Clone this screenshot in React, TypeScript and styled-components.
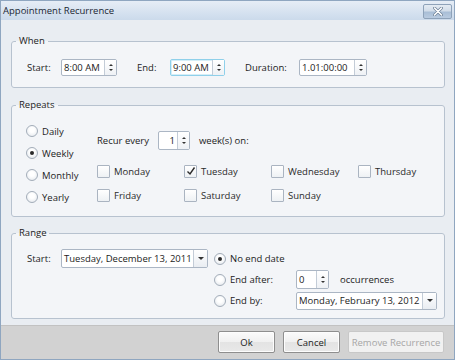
import React from "react";
import styled, { createGlobalStyle, css } from "styled-components";

const GlobalStyle = createGlobalStyle`
  html, body { margin: 0; padding: 0; background: #ffffff; }
  body { font-family: "Open Sans", "Noto Sans", Arial, sans-serif; font-size: 9.5px; color: #1c1c1c; }
  * { box-sizing: border-box; }
`;

const Window = styled.div`
  width: 455px;
  height: 360px;
  border: 1px solid #8fa6c0;
  display: flex;
  flex-direction: column;
  background: #e9edf2;
`;

const TitleBar = styled.div`
  height: 19px;
  flex: none;
  display: flex;
  align-items: center;
  justify-content: space-between;
  padding: 0 2px 0 2px;
  background: linear-gradient(#e6edf6, #cbdaeb);
  color: #1b2733;
  font-size: 9.5px;
`;

const CloseButton = styled.button`
  width: 29px;
  height: 15px;
  padding: 0;
  margin-top: 1px;
  border: 1px solid #8ea2b9;
  border-radius: 2px;
  background: linear-gradient(#e4ebf3 0%, #d2dde9 45%, #a9bed6 55%, #b9cbe0 100%);
  display: flex;
  align-items: center;
  justify-content: center;
`;

const Body = styled.div`
  flex: 1;
  display: flex;
  flex-direction: column;
  gap: 10px;
  padding: 14px 9px 0 10px;
`;

const Group = styled.fieldset<{ $pt: number; $pb: number; $mt?: number }>`
  margin: ${(p) => p.$mt ?? 0}px 0 0 0;
  border: 1px solid #b7c2cf;
  border-radius: 3px;
  background: #f3f5f8;
  padding: ${(p) => p.$pt}px 0 ${(p) => p.$pb}px 0;
  min-width: 0;
`;

const Legend = styled.legend`
  padding: 0 3px;
  margin-left: 4px;
  line-height: 14px;
  height: 14px;
  color: #1c1c1c;
`;

const Row = styled.div<{ $pl?: number; $h?: number; $mt?: number }>`
  display: flex;
  align-items: center;
  padding-left: ${(p) => p.$pl ?? 0}px;
  margin-top: ${(p) => p.$mt ?? 0}px;
  height: ${(p) => (p.$h ? `${p.$h}px` : "auto")};
`;

const FieldLabel = styled.span<{ $w: number; $ml?: number }>`
  width: ${(p) => p.$w}px;
  margin-left: ${(p) => p.$ml ?? 0}px;
  flex: none;
  white-space: nowrap;
`;

const BoxFrame = styled.div<{ $w: number; $h: number; $focus?: boolean }>`
  width: ${(p) => p.$w}px;
  height: ${(p) => p.$h}px;
  flex: none;
  display: flex;
  border: 1px solid ${(p) => (p.$focus ? "#8fd0ea" : "#abb6c4")};
  border-radius: 2px;
  background: #fff;
  ${(p) =>
    p.$focus &&
    css`
      box-shadow: inset 0 0 0 1px #d5eef8;
    `}
`;

const BoxText = styled.span<{ $align?: string }>`
  flex: 1;
  display: flex;
  align-items: center;
  justify-content: ${(p) => p.$align ?? "flex-start"};
  padding: 0 2px 0 2px;
  white-space: nowrap;
  overflow: hidden;
  color: #1c1c1c;
`;

const SpinButtons = styled.span`
  width: 12px;
  flex: none;
  border-left: 1px solid #c3ccd7;
  display: flex;
  flex-direction: column;
  align-items: center;
  justify-content: center;
  gap: 3px;
  background: linear-gradient(#ffffff, #eef1f5);
`;

const Triangle = styled.span<{ $down?: boolean }>`
  width: 0;
  height: 0;
  border-left: 2px solid transparent;
  border-right: 2px solid transparent;
  ${(p) =>
    p.$down
      ? css`border-top: 2px solid #333;`
      : css`border-bottom: 2px solid #333;`}
`;

const DropButton = styled.span`
  width: 14px;
  flex: none;
  border-left: 1px solid #c3ccd7;
  display: flex;
  align-items: center;
  justify-content: center;
  background: linear-gradient(#ffffff, #e9edf2);
`;

const DropArrow = styled.span`
  width: 0;
  height: 0;
  border-left: 3px solid transparent;
  border-right: 3px solid transparent;
  border-top: 3px solid #333;
`;

const RadioCircle = styled.span<{ $checked?: boolean }>`
  width: 12px;
  height: 12px;
  flex: none;
  border-radius: 50%;
  border: 1px solid #a3adb9;
  background: radial-gradient(circle at 50% 40%, #ffffff 30%, #dfe4ea 100%);
  display: flex;
  align-items: center;
  justify-content: center;
  &::after {
    content: "";
    width: 4px;
    height: 4px;
    border-radius: 50%;
    background: ${(p) => (p.$checked ? "#2a2a2a" : "transparent")};
  }
`;

const OptionLabel = styled.span<{ $gap?: number; $w?: number }>`
  margin-left: ${(p) => p.$gap ?? 4}px;
  width: ${(p) => (p.$w ? `${p.$w}px` : "auto")};
  flex: none;
  white-space: nowrap;
`;

const RadioColumn = styled.div`
  width: 76px;
  flex: none;
  padding-left: 14px;
  display: flex;
  flex-direction: column;
`;

const Separator = styled.div`
  width: 1px;
  flex: none;
  background: #aab5c3;
`;

const RightPane = styled.div`
  flex: 1;
  padding-left: 8px;
  display: flex;
  flex-direction: column;
`;

const DaysGrid = styled.div`
  display: grid;
  grid-template-columns: repeat(4, 87px);
  grid-auto-rows: 24px;
  align-items: center;
  margin-top: 9px;
`;

const CheckItem = styled.div`
  display: flex;
  align-items: center;
  color: #2a2a2a;
`;

const CheckBox = styled.span`
  width: 13px;
  height: 13px;
  flex: none;
  border: 1px solid #aab4c1;
  border-radius: 1px;
  background: linear-gradient(#ffffff, #eef1f4);
  display: flex;
  align-items: center;
  justify-content: center;
`;

const RangeLayout = styled.div`
  display: flex;
  padding-left: 15px;
`;

const RangeLeft = styled.div`
  display: flex;
  align-items: center;
  height: 21px;
  flex: none;
`;

const RangeRight = styled.div`
  display: flex;
  flex-direction: column;
  margin-left: 6px;
`;

const Footer = styled.div`
  height: 34px;
  flex: none;
  margin-top: 6px;
  background: #d2d2d2;
  border-top: 1px solid #c2c2c2;
  display: flex;
  justify-content: flex-end;
  align-items: flex-start;
  gap: 8px;
  padding: 5px 10px 0 0;
`;

const Button = styled.button<{ $w: number; $disabled?: boolean }>`
  width: ${(p) => p.$w}px;
  height: 22px;
  padding: 0;
  font-family: inherit;
  font-size: 9.5px;
  white-space: nowrap;
  border-radius: 2px;
  border: 1px solid ${(p) => (p.$disabled ? "#c8c8c8" : "#8e8e8e")};
  color: ${(p) => (p.$disabled ? "#a6a6a6" : "#1c1c1c")};
  background: ${(p) =>
    p.$disabled ? "#f1f1f1" : "linear-gradient(#fbfbfb 0%, #f0f0f0 50%, #e3e3e3 51%, #e9e9e9 100%)"};
  box-shadow: ${(p) => (p.$disabled ? "none" : "inset 0 0 0 1px #fdfdfd")};
`;

const SpinBox = ({ value, w, h = 17, focus, align }: { value: string; w: number; h?: number; focus?: boolean; align?: string }) => (
  <BoxFrame $w={w} $h={h} $focus={focus}>
    <BoxText $align={align}>{value}</BoxText>
    <SpinButtons>
      <Triangle />
      <Triangle $down />
    </SpinButtons>
  </BoxFrame>
);

const DropDown = ({ value, w, h = 19 }: { value: string; w: number; h?: number }) => (
  <BoxFrame $w={w} $h={h}>
    <BoxText>{value}</BoxText>
    <DropButton>
      <DropArrow />
    </DropButton>
  </BoxFrame>
);

const Radio = ({ label, checked, w }: { label: string; checked?: boolean; w?: number }) => (
  <>
    <RadioCircle $checked={checked} />
    <OptionLabel $w={w}>{label}</OptionLabel>
  </>
);

const Check = ({ label, checked }: { label: string; checked?: boolean }) => (
  <CheckItem>
    <CheckBox>
      {checked && (
        <svg width="10" height="10" viewBox="0 0 10 10">
          <path d="M1.5 5.5 L4 8 L8.5 1.5" fill="none" stroke="#2b2b2b" strokeWidth="1.4" />
        </svg>
      )}
    </CheckBox>
    <OptionLabel $gap={4}>{label}</OptionLabel>
  </CheckItem>
);

export default function App() {
  return (
    <>
      <GlobalStyle />
      <Window>
        <TitleBar>
          <span>Appointment Recurrence</span>
          <CloseButton aria-label="Close">
            <svg width="10" height="9" viewBox="0 0 10 9">
              <path d="M1.5 1 L8.5 8 M8.5 1 L1.5 8" stroke="#6f8298" strokeWidth="3" strokeLinecap="round" />
              <path d="M1.5 1 L8.5 8 M8.5 1 L1.5 8" stroke="#ffffff" strokeWidth="1.6" strokeLinecap="round" />
            </svg>
          </CloseButton>
        </TitleBar>
        <Body>
          <Group $pt={11} $pb={11}>
            <Legend>When</Legend>
            <Row $pl={15}>
              <FieldLabel $w={34}>Start:</FieldLabel>
              <SpinBox value="8:00 AM" w={56} />
              <FieldLabel $w={33} $ml={20}>End:</FieldLabel>
              <SpinBox value="9:00 AM" w={55} focus />
              <FieldLabel $w={54} $ml={20}>Duration:</FieldLabel>
              <SpinBox value="1.01:00:00" w={68} />
            </Row>
          </Group>

          <Group $pt={8} $pb={8}>
            <Legend>Repeats</Legend>
            <Row>
              <RadioColumn>
                <Row $h={22}><Radio label="Daily" /></Row>
                <Row $h={22}><Radio label="Weekly" checked /></Row>
                <Row $h={22}><Radio label="Monthly" /></Row>
                <Row $h={22}><Radio label="Yearly" /></Row>
              </RadioColumn>
              <Separator />
              <RightPane>
                <Row $h={19} $mt={10}>
                  <FieldLabel $w={61}>Recur every</FieldLabel>
                  <SpinBox value="1" w={32} h={19} align="flex-end" />
                  <FieldLabel $w={80} $ml={9}>week(s) on:</FieldLabel>
                </Row>
                <DaysGrid>
                  <Check label="Monday" />
                  <Check label="Tuesday" checked />
                  <Check label="Wednesday" />
                  <Check label="Thursday" />
                  <Check label="Friday" />
                  <Check label="Saturday" />
                  <Check label="Sunday" />
                </DaysGrid>
              </RightPane>
            </Row>
          </Group>

          <Group $pt={8} $pb={7} $mt={-1}>
            <Legend>Range</Legend>
            <RangeLayout>
              <RangeLeft>
                <FieldLabel $w={34}>Start:</FieldLabel>
                <DropDown value="Tuesday, December 13, 2011" w={147} />
              </RangeLeft>
              <RangeRight>
                <Row $h={21}><Radio label="No end date" checked /></Row>
                <Row $h={21}>
                  <Radio label="End after:" w={66} />
                  <SpinBox value="0" w={33} h={19} />
                  <FieldLabel $w={70} $ml={11}>occurrences</FieldLabel>
                </Row>
                <Row $h={21}>
                  <Radio label="End by:" w={66} />
                  <DropDown value="Monday, February 13, 2012" w={141} h={18} />
                </Row>
              </RangeRight>
            </RangeLayout>
          </Group>
        </Body>
        <Footer>
          <Button $w={57}>Ok</Button>
          <Button $w={57}>Cancel</Button>
          <Button $w={96} $disabled disabled>Remove Recurrence</Button>
        </Footer>
      </Window>
    </>
  );
}
